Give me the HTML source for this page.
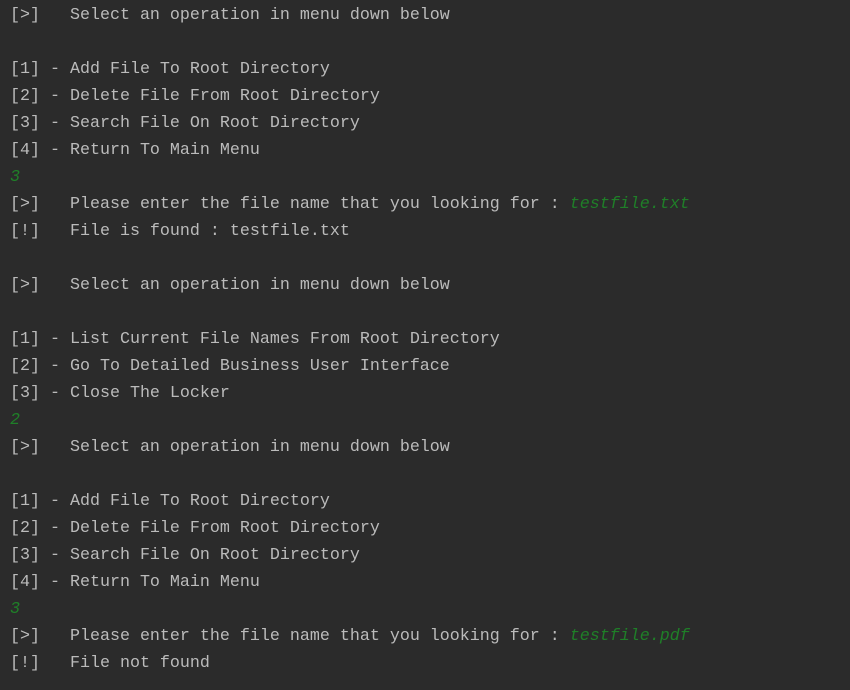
<!DOCTYPE html>
<html><head><meta charset="utf-8"><style>
html,body{margin:0;padding:0;background:#2b2b2b;width:850px;height:690px;overflow:hidden}
pre{margin:0;padding:2px 0 0 10px;font-family:"Liberation Mono",monospace;font-size:16.67px;line-height:27px;color:#bbbbbb;white-space:pre}
i{color:#1f7f28;font-style:italic}
</style></head><body><pre>[&gt;]   Select an operation in menu down below

[1] - Add File To Root Directory
[2] - Delete File From Root Directory
[3] - Search File On Root Directory
[4] - Return To Main Menu
<i>3</i>
[&gt;]   Please enter the file name that you looking for : <i>testfile.txt</i>
[!]   File is found : testfile.txt

[&gt;]   Select an operation in menu down below

[1] - List Current File Names From Root Directory
[2] - Go To Detailed Business User Interface
[3] - Close The Locker
<i>2</i>
[&gt;]   Select an operation in menu down below

[1] - Add File To Root Directory
[2] - Delete File From Root Directory
[3] - Search File On Root Directory
[4] - Return To Main Menu
<i>3</i>
[&gt;]   Please enter the file name that you looking for : <i>testfile.pdf</i>
[!]   File not found
</pre></body></html>
